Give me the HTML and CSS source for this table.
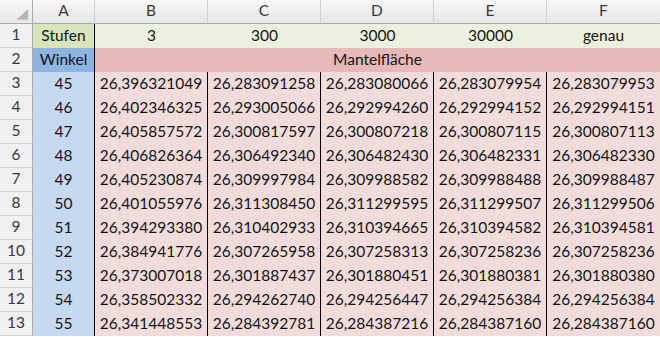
FILE: index.html
```html
<!DOCTYPE html>
<html>
<head>
<meta charset="utf-8">
<link rel="stylesheet" href="styles.css">
</head>
<body>
<div class="sheet">
  <div class="corner"><svg width="33" height="24" viewBox="0 0 33 24"><polygon points="29,9 29,20 17,20" fill="#b4b4b4"/></svg></div>
  <div class="ch">A</div><div class="ch">B</div><div class="ch">C</div><div class="ch">D</div><div class="ch">E</div><div class="ch ch-last">F</div>

  <div class="rh">1</div>
  <div class="c a-g sep">Stufen</div>
  <div class="c g">3</div><div class="c g">300</div><div class="c g">3000</div><div class="c g">30000</div><div class="c g">genau</div>

  <div class="rh">2</div>
  <div class="c a-b sep">Winkel</div>
  <div class="c r merged">Mantelfläche</div>

  <div class="rh">3</div><div class="c a-l sep">45</div><div class="c p sep">26,396321049</div><div class="c p sep">26,283091258</div><div class="c p sep">26,283080066</div><div class="c p sep">26,283079954</div><div class="c p">26,283079953</div>
  <div class="rh">4</div><div class="c a-l sep">46</div><div class="c p sep">26,402346325</div><div class="c p sep">26,293005066</div><div class="c p sep">26,292994260</div><div class="c p sep">26,292994152</div><div class="c p">26,292994151</div>
  <div class="rh">5</div><div class="c a-l sep">47</div><div class="c p sep">26,405857572</div><div class="c p sep">26,300817597</div><div class="c p sep">26,300807218</div><div class="c p sep">26,300807115</div><div class="c p">26,300807113</div>
  <div class="rh">6</div><div class="c a-l sep">48</div><div class="c p sep">26,406826364</div><div class="c p sep">26,306492340</div><div class="c p sep">26,306482430</div><div class="c p sep">26,306482331</div><div class="c p">26,306482330</div>
  <div class="rh">7</div><div class="c a-l sep">49</div><div class="c p sep">26,405230874</div><div class="c p sep">26,309997984</div><div class="c p sep">26,309988582</div><div class="c p sep">26,309988488</div><div class="c p">26,309988487</div>
  <div class="rh">8</div><div class="c a-l sep">50</div><div class="c p sep">26,401055976</div><div class="c p sep">26,311308450</div><div class="c p sep">26,311299595</div><div class="c p sep">26,311299507</div><div class="c p">26,311299506</div>
  <div class="rh">9</div><div class="c a-l sep">51</div><div class="c p sep">26,394293380</div><div class="c p sep">26,310402933</div><div class="c p sep">26,310394665</div><div class="c p sep">26,310394582</div><div class="c p">26,310394581</div>
  <div class="rh">10</div><div class="c a-l sep">52</div><div class="c p sep">26,384941776</div><div class="c p sep">26,307265958</div><div class="c p sep">26,307258313</div><div class="c p sep">26,307258236</div><div class="c p">26,307258236</div>
  <div class="rh">11</div><div class="c a-l sep">53</div><div class="c p sep">26,373007018</div><div class="c p sep">26,301887437</div><div class="c p sep">26,301880451</div><div class="c p sep">26,301880381</div><div class="c p">26,301880380</div>
  <div class="rh">12</div><div class="c a-l sep">54</div><div class="c p sep">26,358502332</div><div class="c p sep">26,294262740</div><div class="c p sep">26,294256447</div><div class="c p sep">26,294256384</div><div class="c p">26,294256384</div>
  <div class="rh">13</div><div class="c a-l sep">55</div><div class="c p sep">26,341448553</div><div class="c p sep">26,284392781</div><div class="c p sep">26,284387216</div><div class="c p sep">26,284387160</div><div class="c p">26,284387160</div>
</div>
</body>
</html>
```
FILE: styles.css
```css
html, body {
  margin: 0;
  padding: 0;
  background: #ffffff;
}
.sheet {
  display: grid;
  grid-template-columns: 33px 62px repeat(5, 113px);
  grid-template-rows: 24px repeat(13, 24px);
  font-family: Lato, "Open Sans", sans-serif;
  font-size: 15.5px;
  color: #141414;
  width: 660px;
}
.sheet > div {
  box-sizing: border-box;
  display: flex;
  align-items: center;
  justify-content: center;
  line-height: 1;
  padding-bottom: 1px;
  white-space: nowrap;
  overflow: hidden;
}
.corner {
  background: linear-gradient(#f6f6f6, #e8e8e8);
  border-right: 1px solid #ababab;
  border-bottom: 1px solid #ababab;
  padding: 0 !important;
}
.corner svg { display: block; }
.ch {
  background: linear-gradient(#f7f7f7, #e6e6e6);
  border-right: 1px solid #d2d2d2;
  border-bottom: 1px solid #ababab;
  color: #3a3a3a;
}
.ch-last { border-right: none; }
.rh {
  background: #f0f0f0;
  border-right: 1px solid #ababab;
  border-bottom: 1px solid #d6d6d6;
  color: #3a3a3a;
}
.sep { border-right: 1px solid #000; }
.a-g { background: #d8e4bc; }
.g { background: #ebf1de; }
.a-b { background: #8db4e2; }
.r { background: #e6b8b7; }
.merged { grid-column: 3 / span 5; }
.a-l { background: #c5d9f1; }
.p { background: #f2dcdb; }
```
